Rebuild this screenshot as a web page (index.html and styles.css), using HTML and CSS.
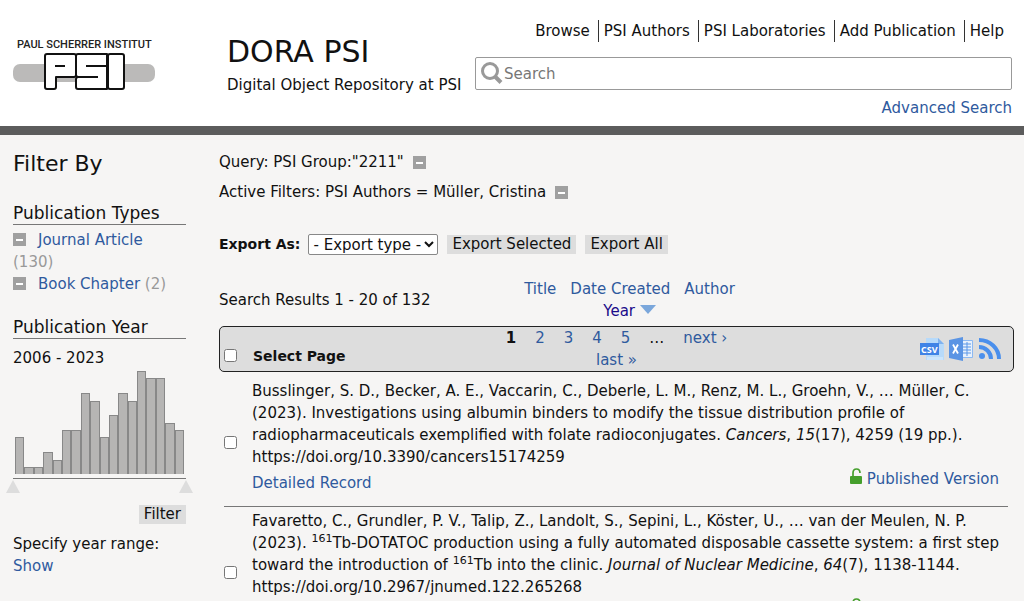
FILE: index.html
```html
<!DOCTYPE html>
<html lang="en">
<head>
  <meta charset="UTF-8" />
  <meta name="viewport" content="width=device-width, initial-scale=1.0" />
  <title>DORA PSI - Search Results</title>
  <link rel="stylesheet" href="styles.css">
</head>
<body>
  <header class="site-header">
    <a class="logo" href="#" aria-label="Paul Scherrer Institut">
      <svg width="144" height="54" viewBox="0 0 144 54">
        <text class="logo-text" x="4" y="11">PAUL SCHERRER INSTITUT</text>
        <rect x="0" y="27" width="142" height="18" rx="7" fill="#bbbab9"/>
        <g fill="#fff" stroke="#111" stroke-width="2" stroke-linejoin="round">
          <path d="M34 17h27q2 0 2 2v19q0 2-2 2H43v10q0 2-2 2h-7q-2 0-2-2V19q0-2 2-2z"/>
          <path d="M65 17h29v35H65q-2 0-2-2V42l1-2-1-2V19q0-2 2-2z"/>
          <path d="M97 17h12q2 0 2 2v31q0 2-2 2H97q-2 0-2-2V19q0-2 2-2z"/>
          <path d="M42 29h10M73 29h22M63 40h22" fill="none"/>
        </g>
      </svg>
    </a>
    <div class="site-name">
      <h1>DORA PSI</h1>
      <p>Digital Object Repository at PSI</p>
    </div>
    <div class="header-tools">
      <nav class="main-menu">
        <a href="#">Browse</a>
        <a href="#">PSI Authors</a>
        <a href="#">PSI Laboratories</a>
        <a href="#">Add Publication</a>
        <a href="#">Help</a>
      </nav>
      <form class="search-box">
        <svg width="24" height="24" viewBox="0 0 24 24" fill="none" stroke="#999">
          <circle cx="10" cy="9" r="7.500" stroke-width="3"/>
          <path d="M15 14.500L21 20.500" stroke-width="4"/>
        </svg>
        <input type="text" placeholder="Search" aria-label="Search">
      </form>
      <a class="advanced" href="#">Advanced Search</a>
    </div>
  </header>

  <div class="page">
    <aside class="sidebar">
      <h2>Filter By</h2>

      <h3>Publication Types</h3>
      <ul class="facets">
        <li><button class="minus" aria-label="Exclude Journal Article"></button><a href="#">Journal Article</a> <span class="count">(130)</span></li>
        <li><button class="minus" aria-label="Exclude Book Chapter"></button><a href="#">Book Chapter</a> <span class="count">(2)</span></li>
      </ul>

      <h3>Publication Year</h3>
      <p>2006 - 2023</p>
      <!-- bar height = share of the largest year (14) -->
      <div class="histogram">
        <span style="height: 36%"></span>
        <span style="height: 7%"></span>
        <span style="height: 7%"></span>
        <span style="height: 21%"></span>
        <span style="height: 14%"></span>
        <span style="height: 43%"></span>
        <span style="height: 43%"></span>
        <span style="height: 79%"></span>
        <span style="height: 71%"></span>
        <span style="height: 36%"></span>
        <span style="height: 57%"></span>
        <span style="height: 79%"></span>
        <span style="height: 71%"></span>
        <span style="height: 100%"></span>
        <span style="height: 93%"></span>
        <span style="height: 93%"></span>
        <span style="height: 50%"></span>
        <span style="height: 43%"></span>
      </div>
      <div class="slider">
        <svg width="14" height="13" viewBox="0 0 14 13"><path d="M7 0l7 13H0z" fill="#ddd"/></svg>
        <svg width="14" height="13" viewBox="0 0 14 13"><path d="M7 0l7 13H0z" fill="#ddd"/></svg>
      </div>
      <div class="filter-action"><button class="btn">Filter</button></div>
      <p>Specify year range:</p>
      <a href="#">Show</a>
    </aside>

    <main class="content">
      <p class="query">Query: PSI Group:"2211" <button class="minus" aria-label="Remove query"></button></p>
      <p class="query">Active Filters: PSI Authors = Müller, Cristina <button class="minus" aria-label="Remove filter"></button></p>

      <form class="export">
        <label for="exportType">Export As:</label>
        <select id="exportType">
          <option>- Export type -</option>
          <option>RIS</option>
          <option>BibTeX</option>
        </select>
        <button class="btn" type="button">Export Selected</button>
        <button class="btn" type="button">Export All</button>
      </form>

      <div class="results-info">
        <span>Search Results 1 - 20 of 132</span>
        <nav class="sort">
          <a href="#">Title</a>
          <a href="#">Date Created</a>
          <a href="#">Author</a>
          <a class="active" href="#">Year <svg width="16" height="9" viewBox="0 0 16 9"><path d="M0 0h16L8 9z" fill="#7ba7db"/></svg></a>
        </nav>
      </div>

      <div class="toolbar">
        <label class="select-page"><input type="checkbox">Select Page</label>
        <nav class="pager">
          <strong>1</strong>
          <a href="#">2</a>
          <a href="#">3</a>
          <a href="#">4</a>
          <a href="#">5</a>
          <span>…</span>
          <a href="#">next ›</a>
          <a href="#">last »</a>
        </nav>
        <div class="feeds">
          <a href="#" aria-label="CSV">
            <svg width="24" height="24" viewBox="0 0 24 24">
              <path d="M6 1h12l6 6v16H6z" fill="#b7dafa"/>
              <path d="M18 1l6 6h-6z" fill="#7fb2ef"/>
              <path d="M7 20h16v3H7z" fill="#cbe5fc"/>
              <rect x="0" y="6" width="19" height="12" fill="#3f83e6"/>
              <text class="csv-text" x="1" y="16">CSV</text>
            </svg>
          </a>
          <a href="#" aria-label="Excel">
            <svg width="24" height="24" viewBox="0 0 24 24">
              <rect x="12" y="3" width="12" height="18" rx="1" fill="#8db9f2"/>
              <path d="M14 4h9v16h-9z" fill="#e8f1fc"/>
              <path d="M14 7h8M14 10h8M14 13h8M14 16h8M18 5v14" stroke="#5b97e8"/>
              <path d="M0 3l14-3v24L0 21z" fill="#5a94e4"/>
              <path d="M4 7.500l5 9M9 7.500l-5 9" stroke="#fff" stroke-width="1.800"/>
            </svg>
          </a>
          <a href="#" aria-label="RSS">
            <svg width="24" height="24" viewBox="0 0 24 24" fill="none" stroke="#4a8fec" stroke-width="4">
              <circle cx="4" cy="19" r="3" fill="#4a8fec" stroke="none"/>
              <path d="M1 10a12 12 0 0 1 12 12M1 3a20 19 0 0 1 20 19"/>
            </svg>
          </a>
        </div>
      </div>

      <article class="result">
        <input type="checkbox" aria-label="Select record 1">
        <div class="record">
          <p>Busslinger, S. D., Becker, A. E., Vaccarin, C., Deberle, L. M., Renz, M. L., Groehn, V., … Müller, C. (2023). Investigations using albumin binders to modify the tissue distribution profile of radiopharmaceuticals exemplified with folate radioconjugates. <i>Cancers</i>, <i>15</i>(17), 4259 (19 pp.). https://doi.org/10.3390/cancers15174259</p>
          <div class="links">
            <a href="#">Detailed Record</a>
            <a class="published" href="#"><svg width="13" height="17" viewBox="0 0 13 17"><rect x="0" y="8" width="12" height="8" rx="1" fill="#459f2c"/><path d="M3 8V5q0-4 3.500-4T10 5" fill="none" stroke="#459f2c" stroke-width="1.700"/></svg>Published Version</a>
          </div>
        </div>
      </article>

      <article class="result">
        <input type="checkbox" aria-label="Select record 2">
        <div class="record">
          <p>Favaretto, C., Grundler, P. V., Talip, Z., Landolt, S., Sepini, L., Köster, U., … van der Meulen, N. P. (2023). <sup>161</sup>Tb-DOTATOC production using a fully automated disposable cassette system: a first step toward the introduction of <sup>161</sup>Tb into the clinic. <i>Journal of Nuclear Medicine</i>, <i>64</i>(7), 1138-1144. https://doi.org/10.2967/jnumed.122.265268</p>
          <div class="links">
            <a href="#">Detailed Record</a>
            <a class="published" href="#"><svg width="13" height="17" viewBox="0 0 13 17"><rect x="0" y="8" width="12" height="8" rx="1" fill="#459f2c"/><path d="M3 8V5q0-4 3.500-4T10 5" fill="none" stroke="#459f2c" stroke-width="1.700"/></svg>Published Version</a>
          </div>
        </div>
      </article>
    </main>
  </div>
</body>
</html>
```
FILE: styles.css
```css
:root {
  --link: #2f5a9e;
  --grey: #ddd;
  --line: #777;
}
* {
  box-sizing: border-box;
}
html {
  scrollbar-width: none;
}
body {
  margin: 0;
  background: #f6f5f4;
  color: #111;
  font-family: Verdana, "DejaVu Sans", sans-serif;
  font-size: 15px;
  line-height: 22px;
}
h1, h2, h3, p, ul {
  margin: 0;
  padding: 0;
  font-weight: normal;
}
a {
  color: var(--link);
  text-decoration: none;
}
button, input, select {
  font: inherit;
  color: inherit;
}
input[type="checkbox"] {
  margin: 0;
  width: 13px;
  height: 13px;
}

/* Header */
.site-header {
  display: flex;
  align-items: flex-start;
  background: #fff;
  border-bottom: 9px solid #5c5c5c;
  padding: 20px 12px 7px 13px;
}
.logo {
  width: 214px;
  padding-top: 17px;
}
.logo svg {
  display: block;
}
.logo-text {
  font-family: Roboto, sans-serif;
  font-size: 11px;
  font-weight: 500;
  fill: #222;
}
.site-name {
  width: 248px;
  padding-top: 12px;
  white-space: nowrap;
}
.site-name h1 {
  font-size: 30px;
  line-height: 40px;
}
.site-name p {
  padding-top: 2px;
}
.header-tools {
  flex: 1;
}
.main-menu {
  display: flex;
  justify-content: flex-end;
  padding-right: 3px;
  white-space: nowrap;
}
.main-menu a {
  color: #111;
  padding: 0 8px 0 5px;
  border-right: 1px solid #333;
}
.main-menu a:last-child {
  border: 0;
  padding-right: 5px;
}
.search-box {
  display: flex;
  align-items: center;
  height: 33px;
  margin-top: 15px;
  padding-left: 4px;
  border: 1px solid #999;
  border-radius: 2px;
}
.search-box input {
  flex: 1;
  border: 0;
  outline: 0;
  padding: 0;
  background: none;
}
.search-box input::placeholder {
  color: #777;
}
.advanced {
  display: block;
  margin-top: 7px;
  text-align: right;
}

/* Page */
.page {
  display: grid;
  grid-template-columns: 173px 1fr;
  column-gap: 33px;
  padding: 16px 10px 0 13px;
}
.minus {
  width: 13px;
  height: 13px;
  padding: 0;
  border: 0;
  background: linear-gradient(#fff, #fff) center / 7px 2px no-repeat #a0a0a0;
}
.btn {
  height: 19px;
  padding: 0 5px;
  border: 0;
  background: var(--grey);
  line-height: 19px;
}

/* Sidebar */
.sidebar h2 {
  font-size: 22px;
  line-height: 26px;
}
.sidebar h3 {
  margin-top: 21px;
  border-bottom: 1px solid var(--line);
  font-size: 17px;
  line-height: 22px;
}
.sidebar h2 + h3 {
  margin-top: 25px;
}
.sidebar h3 + p {
  padding-top: 8px;
}
.facets {
  list-style: none;
  padding-top: 4px;
}
.facets .minus {
  margin-right: 12px;
  vertical-align: -1px;
}
.count {
  color: #999;
}
.histogram {
  display: flex;
  align-items: flex-end;
  height: 103px;
  margin: 2px 2px 0 2px;
}
.histogram span {
  flex: 1;
  background: #b6b5b4;
  border: 1px solid #888;
  border-bottom: 0;
}
.slider {
  display: flex;
  justify-content: space-between;
  margin: 4px -7px 0;
  background: linear-gradient(var(--line), var(--line)) center top / calc(100% - 14px) 1px no-repeat;
  padding-top: 2px;
}
.slider svg {
  display: block;
}
.filter-action {
  display: flex;
  justify-content: flex-end;
  padding: 12px 0 9px;
}

/* Results */
.query {
  margin-bottom: 8px;
}
.query .minus {
  margin-left: 4px;
  vertical-align: -2px;
}
.export {
  display: flex;
  align-items: center;
  padding-top: 22px;
}
.export label {
  font-weight: bold;
  font-size: 14px;
}
.export select {
  width: 130px;
  height: 21px;
  margin: 0 9px 0 8px;
  padding: 0;
  border: 1px solid #888;
  border-radius: 2px;
  background: #fff;
}
.export .btn + .btn {
  margin-left: 9px;
}
.results-info {
  display: grid;
  grid-template-columns: 1fr 220px 1fr;
  align-items: center;
  padding: 23px 0 4px;
}
.sort {
  display: flex;
  flex-wrap: wrap;
  justify-content: center;
  column-gap: 14px;
  margin: 0 -13px 0 13px;
}
.sort .active {
  color: #1a0a8a;
}
.sort svg {
  vertical-align: 2px;
}
.toolbar {
  display: grid;
  grid-template-columns: 1fr 250px 1fr;
  border: 1px solid #222;
  border-radius: 5px;
  background: var(--grey);
}
.select-page {
  display: flex;
  align-items: center;
  gap: 16px;
  padding: 13px 0 0 4px;
  font-weight: bold;
  font-size: 14px;
}
.pager {
  display: flex;
  flex-wrap: wrap;
  justify-content: center;
  column-gap: 19px;
}
.feeds {
  display: flex;
  align-items: center;
  justify-content: flex-end;
  gap: 5px;
  padding-right: 11px;
}
.feeds svg {
  display: block;
}
.csv-text {
  font-family: "Open Sans", sans-serif;
  font-size: 9px;
  font-weight: bold;
  fill: #fff;
}
.result {
  display: flex;
  align-items: center;
  gap: 15px;
  margin: 0 6px 0 5px;
  padding: 8px 0 12px;
}
.result > input {
  margin-top: 10px;
}
.result + .result {
  padding-top: 3px;
  border-top: 1px solid var(--line);
}
.record {
  flex: 1;
}
.result sup {
  font-size: 11px;
  line-height: 0;
}
.links {
  display: flex;
  align-items: flex-start;
  justify-content: space-between;
  padding-right: 9px;
}
.links a {
  padding-top: 4px;
}
.links .published {
  padding-top: 0;
}
.published svg {
  margin-right: 4px;
  vertical-align: -1px;
}
```
